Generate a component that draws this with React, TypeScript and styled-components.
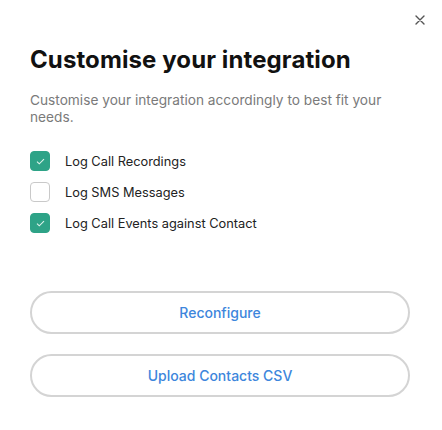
import React, { useState } from 'react';
import styled, { createGlobalStyle } from 'styled-components';

const GlobalStyle = createGlobalStyle`
  body {
    margin: 0;
    background: #fff;
    font-family: 'Inter', 'Noto Sans', sans-serif;
  }
`;

const Modal = styled.div`
  position: relative;
  width: 442px;
  height: 430px;
  box-sizing: border-box;
  padding: 44px 32px 0 30px;
  background: #fff;
`;

const CloseButton = styled.button`
  position: absolute;
  top: 13px;
  right: 15px;
  width: 14px;
  height: 14px;
  padding: 0;
  border: none;
  background: none;
  cursor: pointer;
  display: flex;
  align-items: center;
  justify-content: center;
  color: #555;
`;

const Title = styled.h2`
  margin: 0;
  font-size: 24px;
  line-height: 32px;
  font-weight: 700;
  color: #111;
  letter-spacing: 0.1px;
`;

const Description = styled.p`
  margin: 16px 0 0;
  font-size: 13.7px;
  line-height: 17px;
  color: #7a7a7a;
`;

const OptionList = styled.div`
  display: flex;
  flex-direction: column;
  gap: 11px;
  margin-top: 25px;
`;

const OptionRow = styled.label`
  display: flex;
  align-items: center;
  gap: 15px;
  cursor: pointer;
  font-size: 12.8px;
  color: #222;
`;

const Box = styled.span<{ checked: boolean }>`
  width: 20px;
  height: 20px;
  box-sizing: border-box;
  border-radius: 4px;
  display: flex;
  align-items: center;
  justify-content: center;
  background: ${(p) => (p.checked ? '#2ea387' : '#fff')};
  border: 1px solid ${(p) => (p.checked ? '#2ea387' : '#c9c9c9')};
`;

const ButtonStack = styled.div`
  display: flex;
  flex-direction: column;
  gap: 20px;
  margin-top: 58px;
`;

const OutlineButton = styled.button`
  height: 43px;
  width: 100%;
  border-radius: 22px;
  border: 2px solid #d4d4d4;
  background: #fff;
  color: #3d86dc;
  font-family: inherit;
  font-size: 14px;
  font-weight: 500;
  cursor: pointer;
`;

const OPTIONS = [
  { id: 'recordings', label: 'Log Call Recordings', initial: true },
  { id: 'sms', label: 'Log SMS Messages', initial: false },
  { id: 'events', label: 'Log Call Events against Contact', initial: true },
];

const App: React.FC = () => {
  const [checked, setChecked] = useState<Record<string, boolean>>(
    Object.fromEntries(OPTIONS.map((o) => [o.id, o.initial]))
  );

  return (
    <>
      <GlobalStyle />
      <Modal>
        <CloseButton aria-label="Close">
          <svg width="10" height="10" viewBox="0 0 10 10">
            <path d="M1 1L9 9M9 1L1 9" stroke="currentColor" strokeWidth="1.4" strokeLinecap="round" />
          </svg>
        </CloseButton>
        <Title>Customise your integration</Title>
        <Description>
          Customise your integration accordingly to best fit your needs.
        </Description>
        <OptionList>
          {OPTIONS.map((o) => (
            <OptionRow
              key={o.id}
              onClick={() => setChecked((c) => ({ ...c, [o.id]: !c[o.id] }))}
            >
              <Box checked={checked[o.id]}>
                {checked[o.id] && (
                  <svg width="9" height="7" viewBox="0 0 9 7">
                    <path d="M1 3.6L3.3 5.8L8 1.2" fill="none" stroke="#dff3ec" strokeWidth="1.1" />
                  </svg>
                )}
              </Box>
              {o.label}
            </OptionRow>
          ))}
        </OptionList>
        <ButtonStack>
          <OutlineButton>Reconfigure</OutlineButton>
          <OutlineButton>Upload Contacts CSV</OutlineButton>
        </ButtonStack>
      </Modal>
    </>
  );
};

export default App;
